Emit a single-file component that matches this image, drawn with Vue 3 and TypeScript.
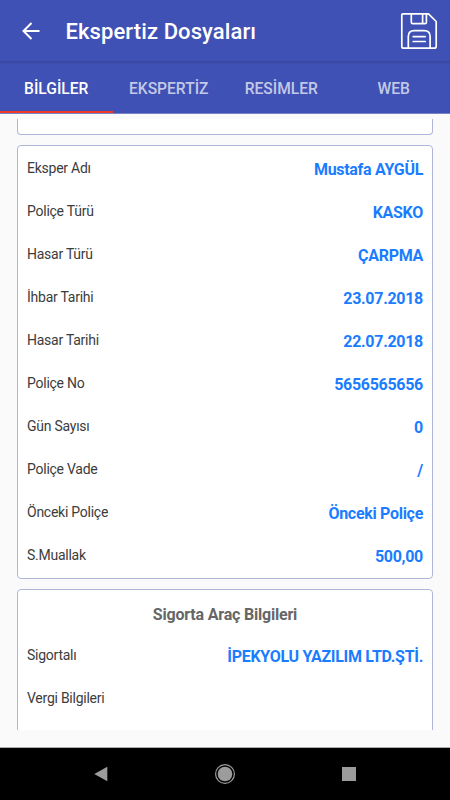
<script setup lang="ts">
interface Row {
  label: string
  value: string
}

const tabs: string[] = ['BİLGİLER', 'EKSPERTİZ', 'RESİMLER', 'WEB']
const activeTab = 'BİLGİLER'

const policyRows: Row[] = [
  { label: 'Eksper Adı', value: 'Mustafa AYGÜL' },
  { label: 'Poliçe Türü', value: 'KASKO' },
  { label: 'Hasar Türü', value: 'ÇARPMA' },
  { label: 'İhbar Tarihi', value: '23.07.2018' },
  { label: 'Hasar Tarihi', value: '22.07.2018' },
  { label: 'Poliçe No', value: '5656565656' },
  { label: 'Gün Sayısı', value: '0' },
  { label: 'Poliçe Vade', value: '/' },
  { label: 'Önceki Poliçe', value: 'Önceki Poliçe' },
  { label: 'S.Muallak', value: '500,00' },
]

const vehicleRows: Row[] = [
  { label: 'Sigortalı', value: 'İPEKYOLU YAZILIM LTD.ŞTİ.' },
  { label: 'Vergi Bilgileri', value: '' },
]
</script>

<template>
  <div class="screen">
    <header class="bar">
      <svg class="back" width="20" height="20" viewBox="0 0 20 20">
        <path d="M18.5 10H2.5M10.5 2L2.5 10l8 8" />
      </svg>
      <h1 class="title">Ekspertiz Dosyaları</h1>
      <svg class="save" width="38" height="38" viewBox="0 0 38 38">
        <path d="M3 1.8H28.5L36.2 9.5V34.2Q36.2 36.2 34.2 36.2H3.8Q1.8 36.2 1.8 34.2V3Q1.8 1.8 3 1.8Z" />
        <path d="M11.3 2V10.2Q11.3 11.6 12.7 11.6H25Q26.4 11.6 26.4 10.2V2M22.6 2V11.5" />
        <path d="M8.3 36V24.5Q8.3 18.7 14.1 18.7H24.3Q30.1 18.7 30.1 24.5V36" />
        <path d="M13.2 24.6H25.2M13.2 29.5H25.2" />
      </svg>
    </header>
    <nav class="tabs">
      <div v-for="tab in tabs" :key="tab" class="tab" :class="{ active: tab === activeTab }">{{ tab }}</div>
    </nav>
    <main class="content">
      <section class="card tail"></section>
      <section class="card policy">
        <div v-for="row in policyRows" :key="row.label" class="row">
          <span class="label">{{ row.label }}</span>
          <span class="value">{{ row.value }}</span>
        </div>
      </section>
      <section class="card vehicle">
        <h2 class="heading">Sigorta Araç Bilgileri</h2>
        <div v-for="row in vehicleRows" :key="row.label" class="row">
          <span class="label">{{ row.label }}</span>
          <span class="value">{{ row.value }}</span>
        </div>
      </section>
    </main>
    <footer class="system">
      <svg width="14" height="16" viewBox="0 0 14 16"><path d="M13.3 .8V15.3L.3 8Z" /></svg>
      <svg width="22" height="22" viewBox="0 0 22 22">
        <circle class="ring" cx="11" cy="11" r="9.4" />
        <circle cx="11" cy="11" r="7.3" />
      </svg>
      <svg width="14" height="14" viewBox="0 0 14 14"><path d="M0 0H14V14H0Z" /></svg>
    </footer>
  </div>
</template>

<style>
body {
  background: #fafafa;
}
</style>

<style scoped>
.screen {
  box-sizing: border-box;
  display: flex;
  flex-direction: column;
  width: 450px;
  height: 800px;
  overflow: hidden;
  background: #fafafa;
  font-family: Roboto, "Liberation Sans", sans-serif;
}

.bar {
  box-sizing: border-box;
  flex: none;
  display: flex;
  align-items: center;
  height: 61px;
  padding: 0 12px 0 21px;
  background: #3f51b5;
}

.back {
  flex: none;
  fill: none;
  stroke: #fff;
  stroke-width: 2;
}

.title {
  flex: 1;
  margin: 2px 0 0 24.5px;
  color: #fff;
  font-size: 22px;
  font-weight: 500;
  letter-spacing: 0.1px;
  line-height: 28px;
  white-space: nowrap;
}

.save {
  flex: none;
  fill: none;
  stroke: #fff;
  stroke-width: 1.7;
  stroke-linecap: round;
  stroke-linejoin: round;
}

.tabs {
  box-sizing: border-box;
  flex: none;
  display: grid;
  grid-template-columns: repeat(4, 1fr);
  height: 53px;
  border-bottom: 1px solid #7884ca;
  background: linear-gradient(#37479e, #3f51b5 4px);
}

.tab {
  display: flex;
  align-items: center;
  justify-content: center;
  padding-top: 5px;
  border-bottom: 2px solid transparent;
  color: rgba(255, 255, 255, 0.7);
  font-size: 15.6px;
  font-weight: 500;
}

.tab.active {
  border-bottom-color: #f13a24;
  color: #fff;
}

.content {
  box-sizing: border-box;
  flex: none;
  display: flex;
  flex-direction: column;
  gap: 10px;
  height: 611px;
  margin: 5px 17px 0;
  overflow: hidden;
}

.card {
  box-sizing: border-box;
  flex: none;
  border: 1px solid #b2b5db;
  border-radius: 4px;
  background: #fff;
}

.tail {
  height: 16px;
  border-top: 0;
  border-radius: 0 0 4px 4px;
}

.policy {
  height: 434px;
  padding: 1px 9px 0;
}

.vehicle {
  height: 200px;
  padding: 1px 9px 0;
}

.row {
  display: flex;
  justify-content: space-between;
  height: 43px;
}

.label {
  padding-top: 13px;
  color: #3c3c3c;
  font-size: 14px;
  letter-spacing: -0.25px;
  line-height: 16px;
}

.value {
  padding-top: 13px;
  color: #1a7cff;
  font-size: 16px;
  font-weight: 700;
  letter-spacing: -0.3px;
  line-height: 20px;
}

.heading {
  height: 43px;
  margin: 0;
  padding-top: 14px;
  box-sizing: border-box;
  color: #666;
  font-size: 16px;
  font-weight: 700;
  letter-spacing: -0.2px;
  line-height: 20px;
  text-align: center;
}

.system {
  box-sizing: border-box;
  flex: none;
  display: flex;
  align-items: center;
  justify-content: space-between;
  height: 53px;
  margin-top: auto;
  padding: 0 94px;
  border-top: 1px solid #aaa;
  background: #000;
  fill: #9c9c9c;
}

.ring {
  fill: none;
  stroke: #9c9c9c;
  stroke-width: 1.2;
}
</style>
